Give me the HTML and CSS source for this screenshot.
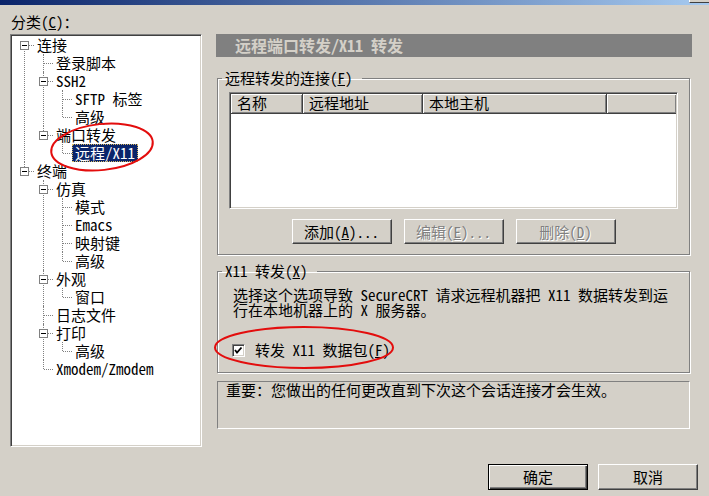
FILE: index.html
```html
<!DOCTYPE html>
<html lang="zh-CN">
<head>
    <meta charset="UTF-8">
    <title>会话选项</title>
    <link rel="stylesheet" href="styles.css">
</head>
<body>
<div class="dialog">
    <div class="titlebar"><span class="tb-edge"></span></div>
    <div class="main">
        <div class="left">
            <div class="cat-label">分类(<u>C</u>)：</div>
            <div class="tree">
                <ul>
                    <li><div class="row"><span class="exp"></span><span class="label">连接</span></div>
                        <ul>
                            <li><div class="row"><span class="label">登录脚本</span></div></li>
                            <li><div class="row"><span class="exp"></span><span class="label">SSH2</span></div>
                                <ul>
                                    <li><div class="row"><span class="label">SFTP 标签</span></div></li>
                                    <li><div class="row"><span class="label">高级</span></div></li>
                                </ul>
                            </li>
                            <li><div class="row"><span class="exp"></span><span class="label">端口转发</span></div>
                                <ul>
                                    <li><div class="row"><span class="label selected">远程/X11</span></div></li>
                                </ul>
                            </li>
                        </ul>
                    </li>
                    <li><div class="row"><span class="exp"></span><span class="label">终端</span></div>
                        <ul>
                            <li><div class="row"><span class="exp"></span><span class="label">仿真</span></div>
                                <ul>
                                    <li><div class="row"><span class="label">模式</span></div></li>
                                    <li><div class="row"><span class="label">Emacs</span></div></li>
                                    <li><div class="row"><span class="label">映射键</span></div></li>
                                    <li><div class="row"><span class="label">高级</span></div></li>
                                </ul>
                            </li>
                            <li><div class="row"><span class="exp"></span><span class="label">外观</span></div>
                                <ul>
                                    <li><div class="row"><span class="label">窗口</span></div></li>
                                </ul>
                            </li>
                            <li><div class="row"><span class="label">日志文件</span></div></li>
                            <li><div class="row"><span class="exp"></span><span class="label">打印</span></div>
                                <ul>
                                    <li><div class="row"><span class="label">高级</span></div></li>
                                </ul>
                            </li>
                            <li><div class="row"><span class="label">Xmodem/Zmodem</span></div></li>
                        </ul>
                    </li>
                </ul>
            </div>
        </div>

        <div class="right">
            <div class="header">远程端口转发/X11 转发</div>

            <fieldset class="group group-conn">
                <legend>远程转发的连接(<u>F</u>)</legend>
                <div class="list">
                    <div class="list-head">
                        <div class="col c-name">名称</div>
                        <div class="col c-remote">远程地址</div>
                        <div class="col c-local">本地主机</div>
                        <div class="col c-rest"></div>
                    </div>
                </div>
                <div class="btn-row">
                    <button class="btn">添加(<u>A</u>)...</button>
                    <button class="btn" disabled>编辑(<u>E</u>)...</button>
                    <button class="btn" disabled>删除(<u>D</u>)</button>
                </div>
            </fieldset>

            <fieldset class="group group-x11">
                <legend>X11 转发(<u>X</u>)</legend>
                <p class="desc">选择这个选项导致 SecureCRT 请求远程机器把 X11 数据转发到运<br>行在本地机器上的 X 服务器。</p>
                <div class="check-row">
                    <span class="check">
                        <svg width="9" height="9" viewBox="0 0 9 9"><polyline points="1,4 3,6.5 7.5,1.5" fill="none" stroke="#000" stroke-width="1.8"/></svg>
                    </span>
                    <span>转发 X11 数据包(<u>F</u>)</span>
                </div>
            </fieldset>

            <div class="note">重要：您做出的任何更改直到下次这个会话连接才会生效。</div>
        </div>
    </div>

    <div class="footer">
        <button class="btn btn-big default">确定</button>
        <button class="btn btn-big">取消</button>
    </div>

    <svg class="marks" width="709" height="496">
        <ellipse cx="102" cy="147" rx="51" ry="23" transform="rotate(-6 102 147)" fill="none" stroke="#e30d0d" stroke-width="2"/>
        <ellipse cx="304" cy="347.5" rx="89" ry="20.5" fill="none" stroke="#e30d0d" stroke-width="2"/>
    </svg>
</div>
</body>
</html>
```

FILE: styles.css
```css
body {
    margin: 0;
    background-color: #d4d0c8;
    color: #000;
    font: 15px/18px "Noto Sans Mono CJK SC", "Noto Sans CJK SC", sans-serif;
}
u {
    text-decoration: underline;
}
.dialog {
    position: relative;
    width: 709px;
    height: 496px;
    overflow: hidden;
}
.titlebar {
    display: flex;
    justify-content: flex-end;
    height: 5px;
    background: linear-gradient(to right, #0a246a, #a6caf0);
}
.tb-edge {
    width: 19px;
    height: 2px;
    background-color: #d4d0c8;
    border-left: 1px solid #fff;
    border-bottom: 1px solid #404040;
}
.main {
    display: flex;
    align-items: flex-start;
    gap: 14px;
    padding-left: 10px;
}

/* category tree */
.left {
    width: 192px;
    padding-top: 8px;
}
.cat-label {
    height: 18px;
    padding-left: 1px;
    margin-bottom: 3px;
}
.tree {
    box-sizing: border-box;
    height: 413px;
    padding: 1px;
    background-color: #fff;
    border: 1px solid;
    border-color: #808080 #fff #fff #808080;
    box-shadow: inset 1px 1px #404040, inset -1px -1px #d4d0c8;
}
.tree ul {
    list-style: none;
    margin: 0;
    padding: 0;
}
.tree ul ul {
    margin-left: 19px;
}
.tree li {
    position: relative;
}
.tree li::before {
    content: "";
    position: absolute;
    left: 12px;
    top: 0;
    bottom: 0;
    border-left: 1px dotted #808080;
}
.tree li:last-child::before {
    bottom: auto;
    height: 9px;
}
.tree > ul > li:first-child::before {
    top: 9px;
}
.tree li::after {
    content: "";
    position: absolute;
    left: 13px;
    top: 9px;
    width: 9px;
    border-top: 1px dotted #808080;
}
.row {
    height: 18px;
    padding-left: 22px;
    white-space: nowrap;
}
.exp {
    position: absolute;
    z-index: 1;
    left: 8px;
    top: 5px;
    box-sizing: border-box;
    width: 9px;
    height: 9px;
    background-color: #fff;
    border: 1px solid #808080;
}
.exp::after {
    content: "";
    position: absolute;
    left: 1px;
    top: 3px;
    width: 5px;
    height: 1px;
    background-color: #000;
}
.label {
    display: inline-block;
    vertical-align: top;
    line-height: 16px;
    padding: 0 2px;
    border: 1px solid transparent;
}
.label.selected {
    background-color: #0a246a;
    color: #fff;
    border: 1px dotted #d8b860;
}

/* right side */
.right {
    width: 476px;
    padding-top: 29px;
}
.header {
    height: 23px;
    line-height: 23px;
    padding-left: 19px;
    background-color: #808080;
    color: #d4d0c8;
    font-size: 16px;
    font-weight: bold;
}
.group {
    margin: 8px 2px 0 1px;
    padding: 6px 11px 10px 11px;
    min-width: 0;
    border: 1px solid #808080;
    box-shadow: inset 1px 1px #fff, 1px 1px #fff;
}
.group legend {
    margin-left: -7px;
    padding: 0 9px 0 3px;
    line-height: 16px;
}
.group-conn {
    margin-top: 13px;
}
.list {
    box-sizing: border-box;
    height: 117px;
    padding: 1px;
    background-color: #fff;
    border: 1px solid;
    border-color: #808080 #fff #fff #808080;
    box-shadow: inset 1px 1px #404040, inset -1px -1px #d4d0c8;
}
.list-head {
    display: flex;
    height: 20px;
}
.col {
    box-sizing: border-box;
    height: 20px;
    line-height: 18px;
    padding-left: 6px;
    background-color: #d4d0c8;
    border-right: 1px solid #404040;
    border-bottom: 1px solid #404040;
    box-shadow: inset 1px 1px #fff, inset -1px -1px #808080;
}
.c-name { width: 72px; }
.c-remote { width: 120px; }
.c-local { width: 184px; }
.c-rest { flex: 1; border-right: none; }

.btn-row {
    display: flex;
    justify-content: center;
    gap: 12px;
    margin-top: 10px;
}
.btn {
    box-sizing: border-box;
    width: 100px;
    height: 25px;
    padding: 0;
    font: inherit;
    line-height: 20px;
    color: #000;
    background-color: #d4d0c8;
    border: 1px solid;
    border-color: #fff #404040 #404040 #fff;
    box-shadow: inset -1px -1px #808080;
}
.btn:disabled {
    color: #808080;
    text-shadow: 1px 1px #fff;
}
.btn-big {
    height: 26px;
}
.btn.default {
    border: 1px solid #000;
    box-shadow: inset 1px 1px #fff, inset -1px -1px #404040, inset -2px -2px #808080;
}

.group-x11 {
    padding: 8px 11px 13px 15px;
}
.group-x11 legend {
    margin-left: -11px;
}
.desc {
    margin: 0;
    line-height: 15px;
}
.check-row {
    display: flex;
    align-items: center;
    gap: 10px;
    height: 18px;
    margin-top: 24px;
    margin-left: -1px;
}
.check {
    display: flex;
    align-items: center;
    justify-content: center;
    box-sizing: border-box;
    width: 13px;
    height: 13px;
    background-color: #fff;
    border: 1px solid;
    border-color: #808080 #fff #fff #808080;
    box-shadow: inset 1px 1px #404040, inset -1px -1px #d4d0c8;
}
.note {
    box-sizing: border-box;
    height: 48px;
    margin: 8px 2px 0 1px;
    padding: 0 8px;
    line-height: 16px;
    border: 1px solid;
    border-color: #808080 #fff #fff #808080;
}

.footer {
    display: flex;
    justify-content: flex-end;
    gap: 10px;
    margin-top: 17px;
    padding-right: 11px;
}
.marks {
    position: absolute;
    top: 0;
    left: 0;
    pointer-events: none;
}
```
